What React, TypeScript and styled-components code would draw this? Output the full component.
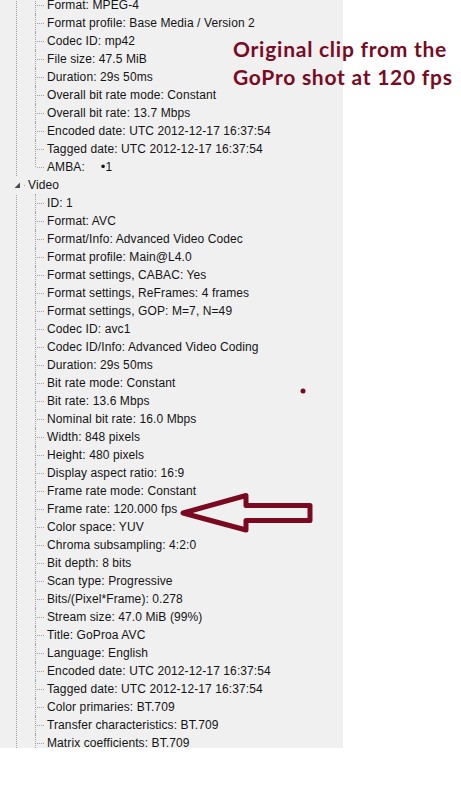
import React from "react";
import styled, { createGlobalStyle } from "styled-components";

const GlobalStyle = createGlobalStyle`
  html, body {
    margin: 0;
    padding: 0;
    background: #ffffff;
  }
`;

const Page = styled.div`
  position: relative;
  width: 461px;
  height: 790px;
  overflow: hidden;
  background: #ffffff;
`;

const Panel = styled.div`
  width: 343px;
  height: 748px;
  background: #f0f0f0;
  overflow: hidden;
`;

const Tree = styled.div`
  margin: -4px 0 0 16px;
  min-height: 780px;
  border-left: 1px dotted #a0a0a0;
  font-family: "Liberation Sans", Arial, sans-serif;
  font-size: 12px;
  letter-spacing: 0.1px;
  color: #141414;
`;

const Row = styled.div<{ $last?: boolean }>`
  position: relative;
  height: 18px;
  line-height: 18px;
  padding-left: 30px;
  white-space: nowrap;

  &::before {
    content: "";
    position: absolute;
    left: 18px;
    top: 0;
    height: ${(p) => (p.$last ? "9px" : "18px")};
    border-left: 1px dotted #a0a0a0;
  }

  &::after {
    content: "";
    position: absolute;
    left: 20px;
    top: 9px;
    width: 7px;
    border-top: 1px dotted #a0a0a0;
  }
`;

const Bullet = styled.span`
  margin-left: 16px;
  font-size: 13px;
`;

const NodeRow = styled.div`
  display: flex;
  align-items: center;
  height: 18px;
  line-height: 18px;
  margin-left: -4px;
`;

const Expander = styled.span`
  display: flex;
  align-items: center;
  width: 8px;
  height: 18px;
  background: #f0f0f0;
  padding-left: 1px;
  box-sizing: border-box;
`;

const Tick = styled.span`
  width: 1px;
  height: 1px;
  margin: 1px 3px 0 3px;
  background: #a0a0a0;
`;

const Caption = styled.div`
  position: absolute;
  left: 233px;
  top: 35px;
  font-family: Lato, "Open Sans", sans-serif;
  font-weight: 700;
  font-size: 21px;
  letter-spacing: 0.75px;
  line-height: 28px;
  color: #7a0a1f;
  white-space: nowrap;
`;

const Overlay = styled.svg`
  position: absolute;
  left: 0;
  top: 0;
`;

const general = [
  "Format: MPEG-4",
  "Format profile: Base Media / Version 2",
  "Codec ID: mp42",
  "File size: 47.5 MiB",
  "Duration: 29s 50ms",
  "Overall bit rate mode: Constant",
  "Overall bit rate: 13.7 Mbps",
  "Encoded date: UTC 2012-12-17 16:37:54",
  "Tagged date: UTC 2012-12-17 16:37:54",
];

const video = [
  "ID: 1",
  "Format: AVC",
  "Format/Info: Advanced Video Codec",
  "Format profile: Main@L4.0",
  "Format settings, CABAC: Yes",
  "Format settings, ReFrames: 4 frames",
  "Format settings, GOP: M=7, N=49",
  "Codec ID: avc1",
  "Codec ID/Info: Advanced Video Coding",
  "Duration: 29s 50ms",
  "Bit rate mode: Constant",
  "Bit rate: 13.6 Mbps",
  "Nominal bit rate: 16.0 Mbps",
  "Width: 848 pixels",
  "Height: 480 pixels",
  "Display aspect ratio: 16:9",
  "Frame rate mode: Constant",
  "Frame rate: 120.000 fps",
  "Color space: YUV",
  "Chroma subsampling: 4:2:0",
  "Bit depth: 8 bits",
  "Scan type: Progressive",
  "Bits/(Pixel*Frame): 0.278",
  "Stream size: 47.0 MiB (99%)",
  "Title: GoProa AVC",
  "Language: English",
  "Encoded date: UTC 2012-12-17 16:37:54",
  "Tagged date: UTC 2012-12-17 16:37:54",
  "Color primaries: BT.709",
  "Transfer characteristics: BT.709",
  "Matrix coefficients: BT.709",
];

export default function App() {
  return (
    <>
      <GlobalStyle />
      <Page>
        <Panel>
          <Tree>
            {general.map((t, i) => (
              <Row key={"g" + i}>{t}</Row>
            ))}
            <Row $last>
              AMBA:<Bullet>•</Bullet>1
            </Row>
            <NodeRow>
              <Expander>
                <svg width="7" height="7" viewBox="0 0 7 7">
                  <polygon points="6,0.5 6,6 0.5,6" fill="#4a4a4a" />
                </svg>
              </Expander>
              <Tick />
              <span>Video</span>
            </NodeRow>
            {video.map((t, i) => (
              <Row key={"v" + i}>{t}</Row>
            ))}
          </Tree>
        </Panel>

        <Caption>
          Original clip from the
          <br />
          GoPro shot at 120 fps
        </Caption>

        <Overlay width="461" height="790" viewBox="0 0 461 790">
          <polygon
            points="183,513 246,495.5 246,505.5 310,505.5 310,520.5 246,520.5 246,530"
            fill="none"
            stroke="#7a0a1f"
            strokeWidth="5"
            strokeLinejoin="round"
          />
          <circle cx="303" cy="391" r="2.5" fill="#7a0a1f" />
        </Overlay>
      </Page>
    </>
  );
}
